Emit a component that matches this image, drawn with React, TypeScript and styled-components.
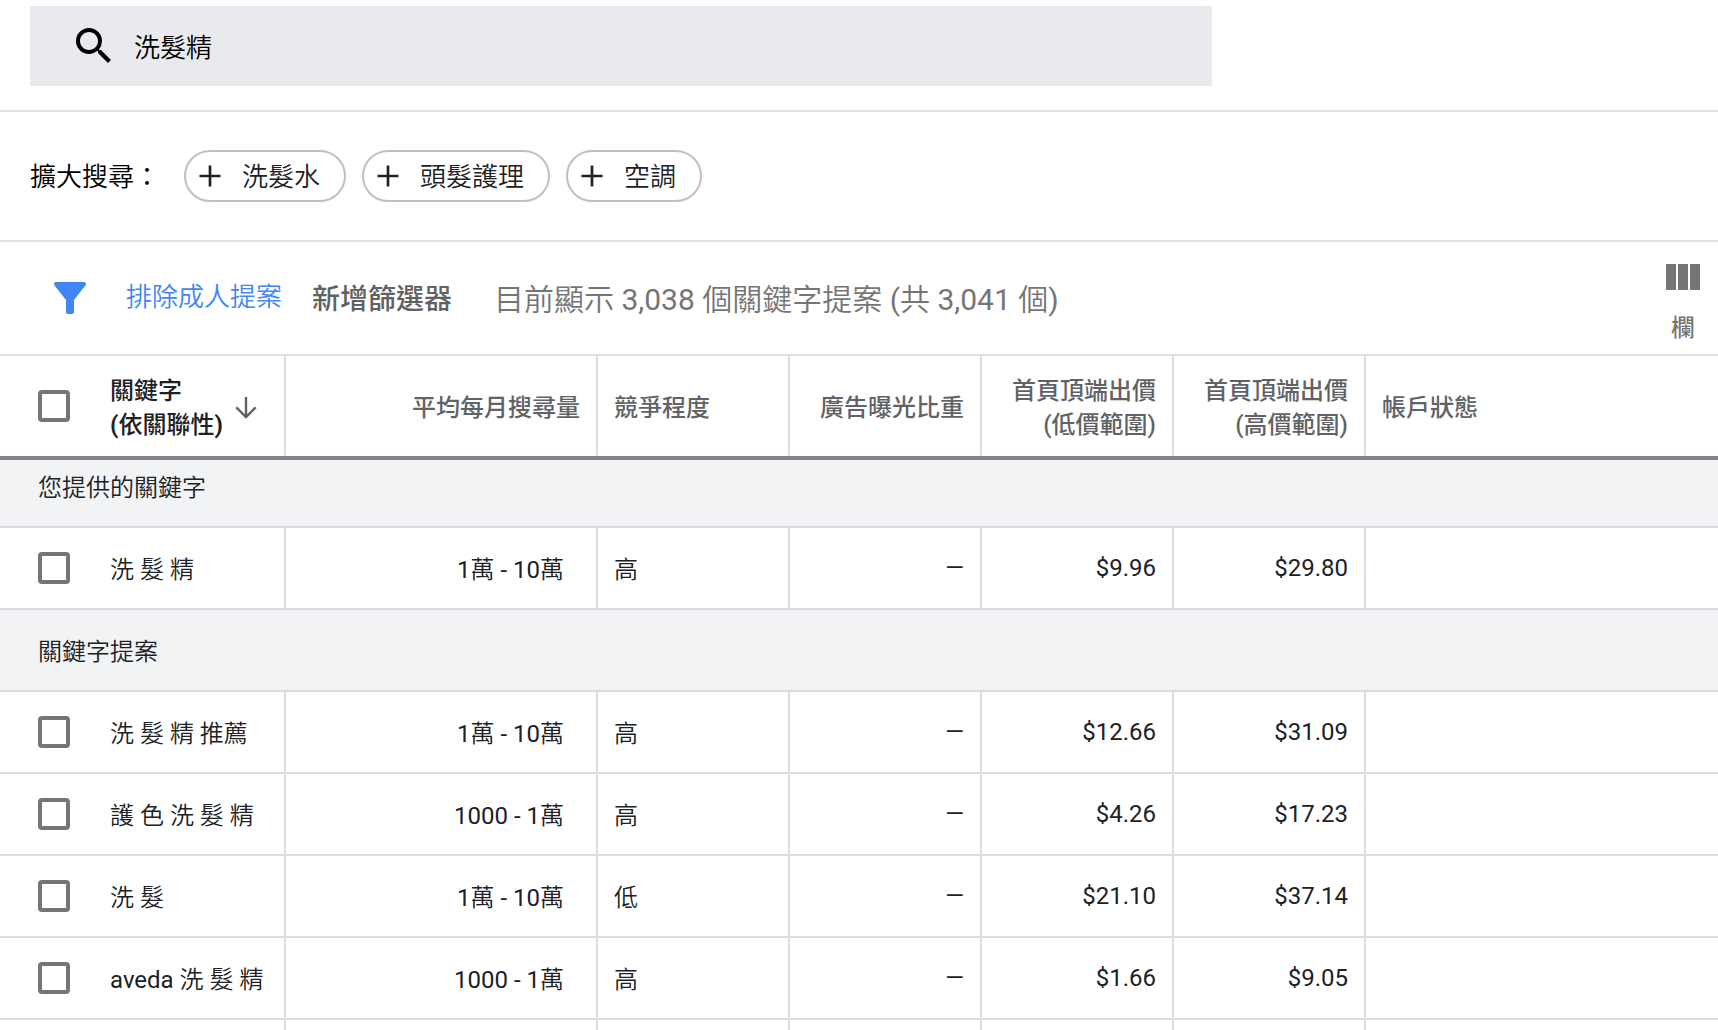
import React from "react";
import styled, { createGlobalStyle, css } from "styled-components";

const mediumFont = `Roboto, "Noto Sans CJK TC Medium", "Noto Sans CJK TC", sans-serif`;

const GlobalStyle = createGlobalStyle`
  *, *::before, *::after { box-sizing: border-box; }
  body {
    margin: 0;
    background: #fff;
    color: #202124;
    font-family: Roboto, "Noto Sans CJK TC DemiLight", "Noto Sans CJK TC", sans-serif;
    font-size: 24px;
    line-height: 28px;
  }
  button, input { font: inherit; color: inherit; }
`;

const Page = styled.main`
  height: 100vh;
  overflow: hidden;
  display: flex;
  flex-direction: column;
`;

const SearchSection = styled.section`
  flex: none;
  padding: 6px 30px 24px;
  border-bottom: 2px solid #e0e0e0;
`;

const SearchBox = styled.label`
  display: flex;
  align-items: center;
  gap: 16px;
  width: 100%;
  max-width: 1182px;
  height: 80px;
  padding: 0 40px;
  background: #e8eaed;
  color: #000;
`;

const SearchInput = styled.input`
  flex: 1;
  min-width: 0;
  height: 48px;
  padding: 0 0 2px;
  border: 0;
  outline: 0;
  background: transparent;
  font-size: 26px;
`;

const BroadenSection = styled.section`
  flex: none;
  display: flex;
  align-items: center;
  gap: 16px;
  padding: 38px 30px;
  border-bottom: 2px solid #e0e0e0;
  color: #000;
  font-size: 26px;
`;

const BroadenLabel = styled.span`
  margin-right: 8px;
  padding-top: 2px;
`;

const Chip = styled.button`
  display: flex;
  align-items: center;
  gap: 20px;
  height: 52px;
  padding: 0 24px 0 12px;
  border: 2px solid #bdc1c6;
  border-radius: 26px;
  background: #fff;
  color: #202124;
  white-space: nowrap;
`;

const ChipText = styled.span`
  padding-top: 2px;
`;

const FilterBar = styled.section`
  flex: none;
  display: flex;
  align-items: center;
  height: 114px;
  padding: 0 12px 0 48px;
  border-bottom: 2px solid #e0e0e0;
  white-space: nowrap;
`;

const PlainButton = styled.button`
  padding: 0;
  border: 0;
  background: transparent;
  line-height: 40px;
`;

const FilterLink = styled(PlainButton)`
  margin: 0 30px 0 34px;
  padding-bottom: 2px;
  color: #4285f4;
  font-size: 26px;
`;

const AddFilter = styled(PlainButton)`
  margin-right: 42px;
  padding-top: 4px;
  color: #616161;
  font-family: ${mediumFont};
  font-size: 28px;
  font-weight: 500;
`;

const Summary = styled.p`
  margin: 0;
  flex: 1;
  padding-top: 4px;
  color: #757575;
  font-size: 30px;
  line-height: 40px;
`;

const ColumnsButton = styled(PlainButton)`
  display: flex;
  flex-direction: column;
  align-items: center;
  align-self: flex-start;
  gap: 18px;
  width: 46px;
  padding-top: 22px;
  color: #757575;
  font-family: ${mediumFont};
`;

const Table = styled.table`
  flex: none;
  width: 100%;
  table-layout: fixed;
  border-collapse: separate;
  border-spacing: 0;
`;

const Column = styled.col<{ $width?: number }>`
  width: ${({ $width }) => ($width ? `${$width}px` : "auto")};
`;

type Align = "left" | "right";

const cell = css<{ $align?: Align }>`
  padding: 0 16px;
  border-right: 2px solid #dadce0;
  text-align: ${({ $align }) => $align ?? "left"};
  vertical-align: middle;
  &:last-child { border-right: 0; }
`;

const HeaderCell = styled.th<{ $align?: Align; $sorted?: boolean }>`
  ${cell}
  height: 100px;
  padding-top: ${({ $sorted }) => ($sorted ? 0 : 4)}px;
  color: ${({ $sorted }) => ($sorted ? "#202124" : "#5f6368")};
  font-family: ${mediumFont};
  font-weight: ${({ $sorted }) => ($sorted ? 700 : 500)};
  line-height: 34px;
  white-space: pre-line;
`;

const Cell = styled.td<{ $align?: Align; $inset?: boolean; $numeric?: boolean }>`
  ${cell}
  height: 82px;
  border-bottom: 2px solid #dadce0;
  padding-top: ${({ $numeric }) => ($numeric ? 0 : 4)}px;
  ${({ $inset }) => $inset && "padding-right: 32px;"}
`;

const GroupCell = styled.th<{ $first?: boolean }>`
  height: ${({ $first }) => ($first ? 72 : 82)}px;
  padding: ${({ $first }) => ($first ? "0 38px 10px" : "4px 38px 0")};
  ${({ $first }) => $first && "border-top: 4px solid #80868b;"}
  border-bottom: 2px solid #dadce0;
  background: #f1f3f4;
  font-weight: 400;
  text-align: left;
`;

const KeywordGroup = styled.div`
  display: flex;
  align-items: center;
  padding-left: 22px;
`;

const KeywordName = styled.span`
  padding-top: 4px;
`;

const Checkbox = styled.input`
  flex: none;
  appearance: none;
  width: 32px;
  height: 32px;
  margin: 0 40px 0 0;
  border: 4px solid #757575;
  border-radius: 4px;
  background: #fff;
`;

const SortButton = styled(PlainButton)`
  display: flex;
  align-items: center;
  gap: 12px;
  padding-top: 4px;
  text-align: left;
  line-height: 34px;
  white-space: pre-line;
`;

const SearchIcon = () => (
  <svg width="48" height="48" viewBox="0 0 24 24" fill="currentColor" aria-hidden="true">
    <path d="M15.5 14h-.79l-.28-.27A6.471 6.471 0 0 0 16 9.5 6.5 6.5 0 1 0 9.5 16c1.61 0 3.09-.59 4.23-1.57l.27.28v.79l5 4.99L20.49 19l-4.99-5zm-6 0C7.01 14 5 11.99 5 9.5S7.01 5 9.5 5 14 7.01 14 9.5 11.99 14 9.5 14z" />
  </svg>
);

const PlusIcon = () => (
  <svg width="24" height="24" viewBox="0 0 24 24" fill="none" stroke="currentColor" strokeWidth="2.7" aria-hidden="true">
    <path d="M12 1.500v21M1.500 12h21" />
  </svg>
);

const FunnelIcon = () => (
  <svg width="44" height="44" viewBox="0 0 44 44" fill="#4285f4" aria-hidden="true">
    <path d="M8 6h28a2 2 0 0 1 1.600 3.200L26 24v12a2 2 0 0 1-2 2h-4a2 2 0 0 1-2-2V24L6.400 9.200A2 2 0 0 1 8 6z" />
  </svg>
);

const ColumnsIcon = () => (
  <svg width="34" height="26" viewBox="0 0 34 26" fill="currentColor" aria-hidden="true">
    <path d="M0 0h10v26H0zM12 0h10v26H12zM24 0h10v26H24z" />
  </svg>
);

const ArrowIcon = () => (
  <svg width="22" height="22" viewBox="0 0 22 22" fill="none" stroke="#5f6368" strokeWidth="2.4" aria-hidden="true">
    <path d="M11 0v19.500M1.300 10.300l9.700 9.700 9.700-9.700" />
  </svg>
);

const suggestions = ["洗髮水", "頭髮護理", "空調"];

const columns: { label: string; width?: number; align: Align }[] = [
  { label: "平均每月搜尋量", width: 312, align: "right" },
  { label: "競爭程度", width: 192, align: "left" },
  { label: "廣告曝光比重", width: 192, align: "right" },
  { label: "首頁頂端出價\n(低價範圍)", width: 192, align: "right" },
  { label: "首頁頂端出價\n(高價範圍)", width: 192, align: "right" },
  { label: "帳戶狀態", align: "left" },
];

interface Keyword {
  name: string;
  volume: string;
  competition: string;
  low: string;
  high: string;
}

const provided: Keyword[] = [
  { name: "洗 髮 精", volume: "1萬 - 10萬", competition: "高", low: "$9.96", high: "$29.80" },
];

const ideas: Keyword[] = [
  { name: "洗 髮 精 推薦", volume: "1萬 - 10萬", competition: "高", low: "$12.66", high: "$31.09" },
  { name: "護 色 洗 髮 精", volume: "1000 - 1萬", competition: "高", low: "$4.26", high: "$17.23" },
  { name: "洗 髮", volume: "1萬 - 10萬", competition: "低", low: "$21.10", high: "$37.14" },
  { name: "aveda 洗 髮 精", volume: "1000 - 1萬", competition: "高", low: "$1.66", high: "$9.05" },
];

const KeywordRow = ({ item }: { item: Keyword }) => (
  <tr>
    <Cell $numeric>
      <KeywordGroup as="label">
        <Checkbox type="checkbox" />
        <KeywordName>{item.name}</KeywordName>
      </KeywordGroup>
    </Cell>
    <Cell $align="right" $inset>{item.volume}</Cell>
    <Cell>{item.competition}</Cell>
    <Cell $align="right" $numeric>—</Cell>
    <Cell $align="right" $numeric>{item.low}</Cell>
    <Cell $align="right" $numeric>{item.high}</Cell>
    <Cell />
  </tr>
);

export default function App() {
  return (
    <Page lang="zh-Hant">
      <GlobalStyle />
      <SearchSection>
        <SearchBox>
          <SearchIcon />
          <SearchInput type="text" aria-label="搜尋關鍵字" defaultValue="洗髮精" />
        </SearchBox>
      </SearchSection>
      <BroadenSection>
        <BroadenLabel>擴大搜尋：</BroadenLabel>
        {suggestions.map((s) => (
          <Chip key={s} type="button">
            <PlusIcon />
            <ChipText>{s}</ChipText>
          </Chip>
        ))}
      </BroadenSection>
      <FilterBar>
        <FunnelIcon />
        <FilterLink type="button">排除成人提案</FilterLink>
        <AddFilter type="button">新增篩選器</AddFilter>
        <Summary>目前顯示 3,038 個關鍵字提案 (共 3,041 個)</Summary>
        <ColumnsButton type="button">
          <ColumnsIcon />
          欄
        </ColumnsButton>
      </FilterBar>
      <Table>
        <colgroup>
          <Column $width={286} />
          {columns.map((c) => (
            <Column key={c.label} $width={c.width} />
          ))}
        </colgroup>
        <thead>
          <tr>
            <HeaderCell $sorted>
              <KeywordGroup>
                <Checkbox type="checkbox" aria-label="全選" />
                <SortButton type="button">
                  {"關鍵字\n(依關聯性)"}
                  <ArrowIcon />
                </SortButton>
              </KeywordGroup>
            </HeaderCell>
            {columns.map((c) => (
              <HeaderCell key={c.label} $align={c.align}>{c.label}</HeaderCell>
            ))}
          </tr>
        </thead>
        <tbody>
          <tr>
            <GroupCell colSpan={7} $first>您提供的關鍵字</GroupCell>
          </tr>
          {provided.map((k) => <KeywordRow key={k.name} item={k} />)}
          <tr>
            <GroupCell colSpan={7}>關鍵字提案</GroupCell>
          </tr>
          {ideas.map((k) => <KeywordRow key={k.name} item={k} />)}
          <tr>
            <Cell /><Cell /><Cell /><Cell /><Cell /><Cell /><Cell />
          </tr>
        </tbody>
      </Table>
    </Page>
  );
}
